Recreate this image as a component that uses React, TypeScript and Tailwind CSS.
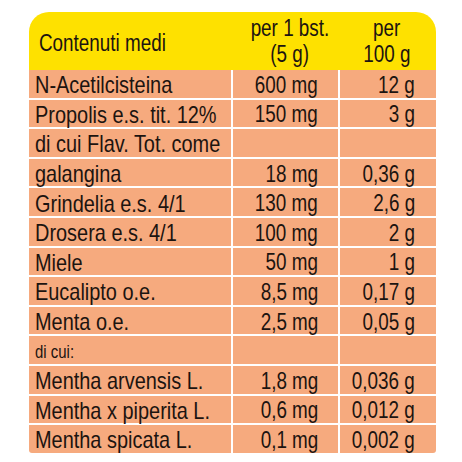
const rows: { name: string; dose: string; per100: string; small?: boolean }[] = [
  { name: "N-Acetilcisteina", dose: "600 mg", per100: "12 g" },
  { name: "Propolis e.s. tit. 12%", dose: "150 mg", per100: "3 g" },
  { name: "di cui Flav. Tot. come", dose: "", per100: "" },
  { name: "galangina", dose: "18 mg", per100: "0,36 g" },
  { name: "Grindelia e.s. 4/1", dose: "130 mg", per100: "2,6 g" },
  { name: "Drosera e.s. 4/1", dose: "100 mg", per100: "2 g" },
  { name: "Miele", dose: "50 mg", per100: "1 g" },
  { name: "Eucalipto o.e.", dose: "8,5 mg", per100: "0,17 g" },
  { name: "Menta o.e.", dose: "2,5 mg", per100: "0,05 g" },
  { name: "di cui:", dose: "", per100: "", small: true },
  { name: "Mentha arvensis L.", dose: "1,8 mg", per100: "0,036 g" },
  { name: "Mentha x piperita L.", dose: "0,6 mg", per100: "0,012 g" },
  { name: "Mentha spicata L.", dose: "0,1 mg", per100: "0,002 g" },
]

// the print uses a condensed Helvetica; Liberation Sans squeezed sideways stands in for it
const narrow = "inline-block whitespace-nowrap scale-x-[0.82]"
const cell = "h-[27.6px] bg-[#f6aa7e] flex items-center pt-[3px] leading-none"

export default function App() {
  return (
    <div className="w-[462px] h-[462px] bg-white pl-[29px] pt-[12px] text-[#1c1410] font-['Liberation_Sans',Arial,sans-serif]">
      <div className="w-[407px]">
        <div className="grid grid-cols-[202px_107px_98px] h-[58px] bg-[#fee100] rounded-t-[20px] text-[23px] leading-[26px]">
          <div className="flex items-center pl-[10px] pt-[3px]">
            <span className={`${narrow} origin-left`}>Contenuti medi</span>
          </div>
          <div className="flex flex-col items-center justify-center pl-[10px]">
            <span className={`${narrow} origin-center`}>per 1 bst.</span>
            <span className={`${narrow} origin-center`}>(5 g)</span>
          </div>
          <div className="flex flex-col items-center justify-center">
            <span className={`${narrow} origin-center`}>per</span>
            <span className={`${narrow} origin-center`}>100 g</span>
          </div>
        </div>
        <div className="grid grid-cols-[202px_105px_96px] gap-[2px] bg-white rounded-b-[3px] overflow-hidden">
          {rows.map((r) => (
            <div key={r.name} className="contents">
              <div className={`${cell} pl-[6px] ${r.small ? "text-[18px]" : "text-[24px]"}`}>
                <span className="inline-block whitespace-nowrap scale-x-[0.83] origin-left">{r.name}</span>
              </div>
              <div className={`${cell} pr-[20px] justify-end text-[23px]`}>
                <span className={`${narrow} origin-right`}>{r.dose}</span>
              </div>
              <div className={`${cell} pr-[21px] justify-end text-[23px]`}>
                <span className={`${narrow} origin-right`}>{r.per100}</span>
              </div>
            </div>
          ))}
        </div>
      </div>
    </div>
  )
}
